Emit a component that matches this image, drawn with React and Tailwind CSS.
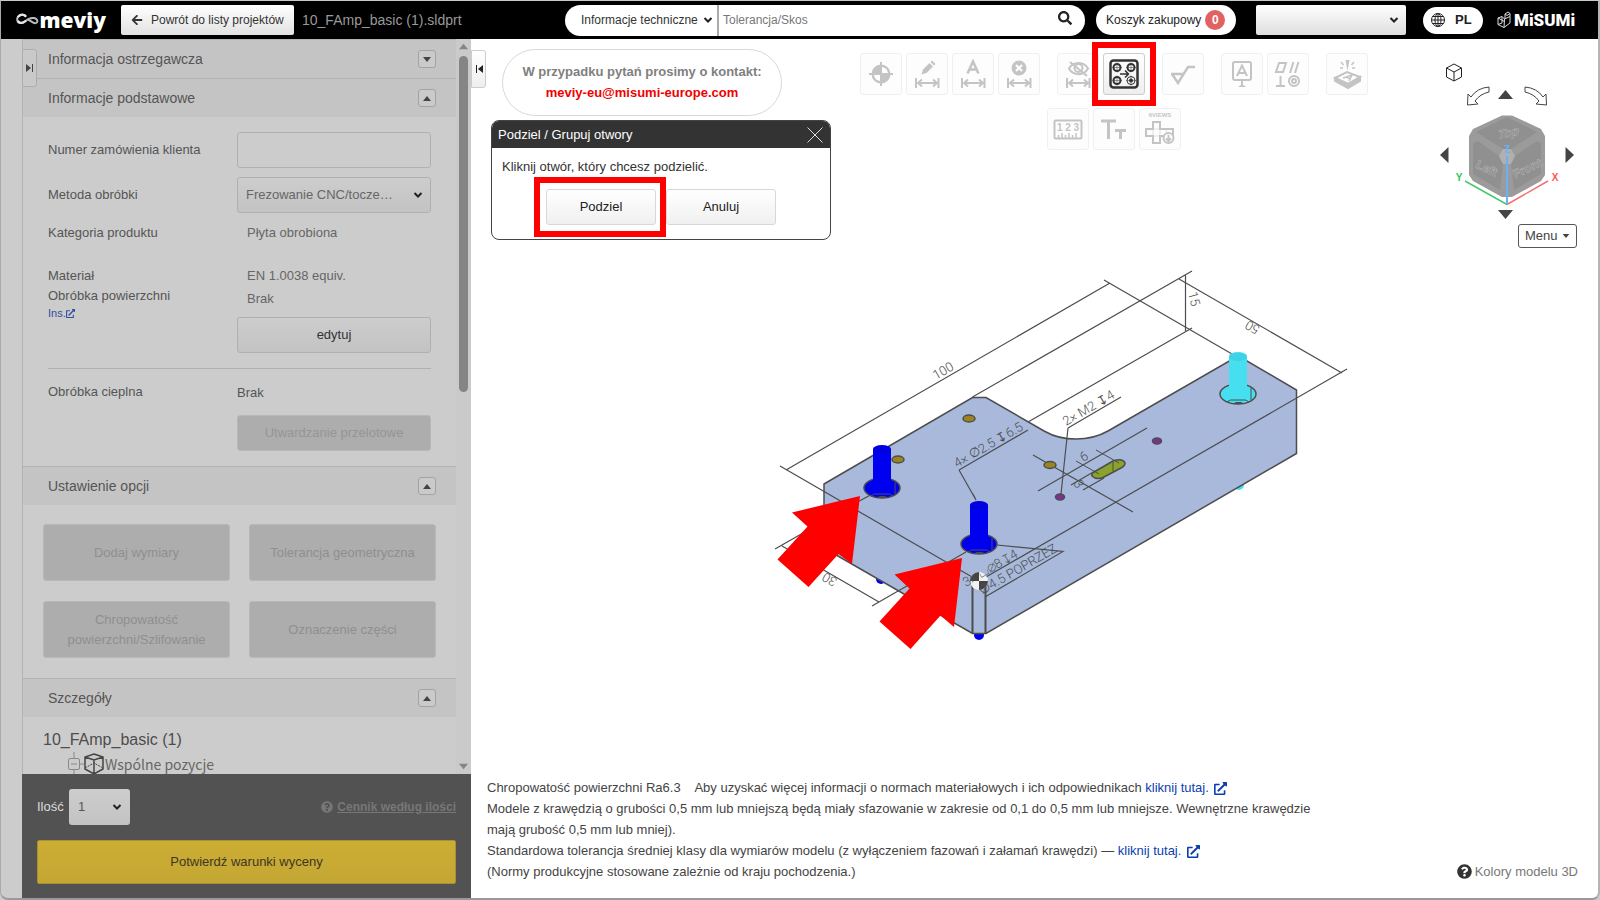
import { FaArrowLeft, FaExternalLinkAlt, FaQuestionCircle, FaSearch } from 'react-icons/fa'

const LINE = '#4d4d4d'

function Chevron({ className }) {
  return (
    <svg viewBox="0 0 10 8" className={`pointer-events-none h-2 w-[10px] ${className}`} fill="none" stroke="#222" strokeWidth="2">
      <path d="M1.5 2 L5 5.5 L8.5 2" />
    </svg>
  )
}

function Triangle({ up, className }) {
  return (
    <svg viewBox="0 0 10 6" className={className} fill="currentColor">
      <path d={up ? 'M0 6 L5 0 L10 6Z' : 'M0 0 L5 6 L10 0Z'} />
    </svg>
  )
}

/* Header */

function MeviyLogo() {
  return (
    <a href="#meviy" className="flex w-[90px] items-center text-white">
      <svg viewBox="0 0 30 18" className="h-[18px] w-[30px]" fill="none" strokeLinecap="round">
        <path d="M12 3.5 C7 0.5 1.5 4 1.5 8 C1.5 13.5 8 14.5 12 10.5 C16 6.5 20 6 23 6.5 C28 7.5 28.5 12.5 25 13 C21.5 13.5 19.5 10 16 9" stroke="#b9b9c0" strokeWidth="2.5" />
        <path d="M3 4.5 C6 1.5 10 2 12 4 M3 11 C6 14 10 12 12 10.5" stroke="#e4e4e8" strokeWidth="3" />
      </svg>
      <span className="font-['Open_Sans',sans-serif] text-[21px] leading-[28px] font-extrabold">meviy</span>
    </a>
  )
}

function Header() {
  return (
    <header className="flex h-[38px] shrink-0 items-center bg-black pr-[26px] pl-[15px]">
      <MeviyLogo />
      <button className="ml-[15px] flex h-[30px] w-[173px] items-center gap-2 rounded-[2px] bg-linear-to-b from-white to-[#e2e2e2] pl-[10px] text-[12px] whitespace-nowrap text-[#333]">
        <FaArrowLeft className="h-3 w-3" />
        Powrót do listy projektów
      </button>
      <span className="ml-2 text-[14px] whitespace-nowrap text-[#999]">10_FAmp_basic (1).sldprt</span>

      <form className="ml-auto flex h-[31px] w-[520px] items-center overflow-hidden rounded-full bg-white text-[12px]">
        <div className="relative flex h-full w-[154px] items-center border-r-2 border-[#aaa]">
          <select aria-label="Kategoria" className="h-full w-full appearance-none pl-4 text-[#333]">
            <option>Informacje techniczne</option>
          </select>
          <Chevron className="absolute right-1" />
        </div>
        <input aria-label="Szukaj" placeholder="Tolerancja/Skos" className="h-full min-w-0 flex-1 px-1 placeholder:text-[#777]" />
        <button type="button" aria-label="Szukaj" className="mr-[13px] pb-1">
          <FaSearch className="h-[14px] w-[14px] text-[#222]" />
        </button>
      </form>

      <button className="ml-[11px] flex h-[30px] w-[140px] items-center gap-1 rounded-full bg-white pl-[10px] text-[12px] text-[#222]">
        Koszyk zakupowy
        <span className="flex h-5 w-5 items-center justify-center rounded-full bg-[#e06262] font-bold text-white">0</span>
      </button>
      <div className="relative ml-5 flex h-[30px] w-[150px] items-center">
        <select aria-label="Konto" className="h-full w-full appearance-none rounded-[2px] bg-linear-to-b from-white to-[#dedede]">
          <option></option>
        </select>
        <Chevron className="absolute right-[7px]" />
      </div>
      <button className="ml-[17px] flex h-[27px] w-[60px] items-center gap-[10px] rounded-full bg-white pl-2 text-[13px] font-bold text-[#222]">
        <svg viewBox="0 0 14 14" className="h-[14px] w-[14px]" fill="none" stroke="#222">
          <circle cx="7" cy="7" r="6.5" />
          <ellipse cx="7" cy="7" rx="3" ry="6.5" />
          <path d="M7 0.5 V13.5 M0.5 7 H13.5 M1.5 3.5 H12.5 M1.5 10.5 H12.5" />
        </svg>
        PL
      </button>
      <a href="#misumi" className="ml-[14px] flex w-[75px] items-center gap-[3px] text-white">
        <svg viewBox="0 0 14 18" className="h-[18px] w-[14px] shrink-0" fill="none" stroke="#ddd" strokeWidth="1">
          <path d="M1 7 L5 5.5 L7.5 8 L13 5.5 V12 L7 16.5 L1 13.5Z M7.5 8 L7 16.5 M1 7 L7.5 10.5 M5 5.5 L5 12 L1 13.5 M8 3 L11 1 L13 2.5 L13 5.5 M8 3 L10 4.5 L13 2.5 M8 3 V7.5" />
        </svg>
        <span className="font-[Roboto,sans-serif] text-[17px] leading-[20px] font-black">MiSUMi</span>
      </a>
    </header>
  )
}

/* Sidebar */

function SectionHead({ title, open = true }) {
  return (
    <div className="flex h-[39px] items-center justify-between border-t border-[#b3b3b3] bg-[#c4c4c4] pr-5 pl-[25px]">
      <h2 className="text-[14px] text-[#555]">{title}</h2>
      <button aria-label={title} className="flex h-[18px] w-[18px] items-center justify-center rounded-[3px] border border-[#a3a3a3] bg-[#cacaca] text-[#444]">
        <Triangle up={open} className="h-[5px] w-2" />
      </button>
    </div>
  )
}

function OptionButton({ children }) {
  return (
    <button disabled className="h-[57px] rounded-[3px] border border-[#b8b8b8] bg-[#adadad] px-5 text-[13px] leading-5 text-[#8f8f8f]">
      {children}
    </button>
  )
}

function BasicInfo() {
  return (
    <div className="grid grid-cols-[189px_194px] px-[25px] py-[15px] text-[13px] leading-[20px] text-[#555]">
      <label htmlFor="order" className="self-center">Numer zamówienia klienta</label>
      <input id="order" className="h-9 rounded-[3px] border border-[#b0b0b0]" />

      <label htmlFor="method" className="mt-[9px] self-center">Metoda obróbki</label>
      <div className="relative mt-[9px] flex h-9 items-center">
        <select id="method" className="h-full w-full appearance-none rounded-[3px] border border-[#b0b0b0] bg-linear-to-b from-[#cdcdcd] to-[#c3c3c3] pl-2 text-[#666]">
          <option>Frezowanie CNC/tocze…</option>
        </select>
        <Chevron className="absolute right-2" />
      </div>

      <span className="mt-[10px]">Kategoria produktu</span>
      <span className="mt-[10px] pl-[10px] text-[#666]">Płyta obrobiona</span>

      <div className="mt-[23px]">
        <p>Materiał</p>
        <p>Obróbka powierzchni</p>
        <a href="#ins" className="flex items-center text-[11px] leading-[14px] text-[#304f9e]">
          Ins.<FaExternalLinkAlt className="h-[9px] w-[9px]" />
        </a>
      </div>
      <div className="mt-[23px]">
        <p className="pl-[10px] text-[#666]">EN 1.0038 equiv.</p>
        <p className="mt-[3px] pl-[10px] text-[#666]">Brak</p>
        <button className="mt-2 h-9 w-full rounded-[3px] border border-[#b0b0b0] bg-linear-to-b from-[#cdcdcd] to-[#c3c3c3] text-[#333]">
          edytuj
        </button>
      </div>

      <hr className="col-span-2 mt-[15px] border-[#b0b0b0]" />
      <span className="mt-[13px]">Obróbka cieplna</span>
      <div className="mt-[14px]">
        <p>Brak</p>
        <button disabled className="mt-[12px] h-9 w-full rounded-[3px] border border-[#b8b8b8] bg-[#adadad] text-[#959595]">
          Utwardzanie przelotowe
        </button>
      </div>
    </div>
  )
}

function Sidebar() {
  return (
    <aside className="ml-[21px] flex w-[449px] shrink-0 flex-col">
      <div className="relative flex min-h-0 flex-1">
        <button aria-label="Zwiń" className="absolute top-[10px] left-0 flex h-[38px] w-[15px] items-center justify-center rounded-r-[3px] border border-[#adadad] bg-[#c9c9c9]">
          <svg viewBox="0 0 8 8" className="h-2 w-2" fill="#444"><path d="M0 0 L5 4 L0 8Z M6 0 H7 V8 H6Z" /></svg>
        </button>
        <div className="min-w-0 flex-1 overflow-hidden border-l border-[#b3b3b3]">
          <SectionHead title="Informacja ostrzegawcza" open={false} />
          <SectionHead title="Informacje podstawowe" />
          <BasicInfo />
          <SectionHead title="Ustawienie opcji" />
          <div className="grid grid-cols-2 gap-x-[19px] gap-y-5 px-5 pt-[19px] pb-5">
            <OptionButton>Dodaj wymiary</OptionButton>
            <OptionButton><span className="whitespace-nowrap">Tolerancja geometryczna</span></OptionButton>
            <OptionButton>Chropowatość powierzchni/Szlifowanie</OptionButton>
            <OptionButton>Oznaczenie części</OptionButton>
          </div>
          <SectionHead title="Szczegóły" />
          <div className="pt-[11px] pl-5">
            <p className="text-[16px] leading-6 text-[#4d4d4d]">10_FAmp_basic (1)</p>
            <div className="flex h-6 items-center pl-6 font-['Noto_Sans_CJK_JP',sans-serif] text-[14px] text-[#666]">
              <svg viewBox="0 0 38 24" className="h-6 w-[38px]" fill="none" stroke="#888">
                <path d="M7 0 V6 M7 18 V24 M13 12 H17 M4 12 H10" />
                <rect x="1.5" y="6.5" width="11" height="11" rx="1.5" />
                <path d="M27 2 L36 5 V17 L27 22 L18 17 V5Z M18 5 L27 8 L36 5 M27 8 V22" stroke="#444" strokeWidth="1.5" />
                <path d="M18 16 L27 11 L36 16" stroke="#444" strokeDasharray="2 1" />
              </svg>
              Wspólne pozycje
            </div>
          </div>
        </div>
        <div className="flex w-[15px] flex-col items-center bg-[#cacaca] pt-1 text-[#858585]">
          <Triangle up className="h-[7px] w-[9px]" />
          <div className="mt-[6px] h-[46%] w-[9px] rounded-full bg-[#858585]" />
          <Triangle className="mt-auto mb-1 h-[7px] w-[9px]" />
        </div>
      </div>

      <div className="bg-[#525252] px-[15px] pt-[15px] pb-[14px] text-[13px]">
        <div className="flex items-center">
          <label htmlFor="qty" className="w-8 text-[#ddd]">Ilość</label>
          <div className="relative flex h-9 w-[61px] items-center">
            <select id="qty" className="h-full w-full appearance-none rounded-[3px] bg-linear-to-b from-[#cdcdcd] to-[#c3c3c3] pl-[9px] text-[#555]">
              <option>1</option>
            </select>
            <Chevron className="absolute right-2" />
          </div>
          <a href="#prices" className="ml-auto flex items-center gap-1 text-[12px] font-bold text-[#777]">
            <FaQuestionCircle className="h-3 w-3" />
            <span className="underline">Cennik według ilości</span>
          </a>
        </div>
        <button className="mt-[15px] h-[44px] w-full rounded-[2px] border border-[#a8912f] bg-linear-to-b from-[#ccae34] to-[#c4a634] text-[#3d3823]">
          Potwierdź warunki wyceny
        </button>
      </div>
    </aside>
  )
}

/* Toolbar */

const dimArrow = <path d="M9 24 V34 M31.5 24 V34 M11 29 H30 M15 25.5 L11 29 L15 32.5 M26 25.5 L30 29 L26 32.5" />

const icons = {
  center: (
    <>
      <circle cx="20" cy="20" r="8.5" fill="currentColor" />
      <path d="M20 8 V32 M8 20 H32" />
      <path d="M21 19 V13 A7 7 0 0 1 27 19Z M19 21 V27 A7 7 0 0 1 13 21Z" fill="#fff" stroke="none" />
    </>
  ),
  edit: (
    <>
      <path d="M14.5 20.5 L16 15.5 L22.5 9 L26 12.5 L19.5 19Z" fill="currentColor" stroke="none" />
      <path d="M23.5 8 L25 6.500 L28.500 10 L27 11.5Z" fill="currentColor" stroke="none" />
      {dimArrow}
    </>
  ),
  text: <><path d="M14.5 19.5 L20 7.5 L25.5 19.5 M16.5 15.5 H23.5" strokeWidth="2.5" />{dimArrow}</>,
  remove: (
    <>
      <circle cx="20" cy="14" r="7.5" fill="currentColor" stroke="none" />
      <path d="M17 11 L23 17 M23 11 L17 17" stroke="#fff" />
      {dimArrow}
    </>
  ),
  hide: (
    <>
      <path d="M11 14.5 C15 7 26 7 30 14.5 C26 22 15 22 11 14.5Z" />
      <circle cx="20.5" cy="14" r="4" />
      <path d="M12 8 L29 22" />
      {dimArrow}
    </>
  ),
  split: (
    <>
      <rect x="6.5" y="6.5" width="27" height="27" rx="3" strokeWidth="2.5" />
      <circle cx="13" cy="13.5" r="3.5" /><circle cx="27" cy="13.5" r="3.5" />
      <circle cx="13" cy="26.5" r="3.5" />
      <circle cx="27" cy="26.5" r="4" strokeWidth="1" />
      <circle cx="27" cy="26.5" r="2" fill="currentColor" stroke="none" />
      <path d="M16 20 H24 M21 16.5 L24.5 20 L21 23.5" strokeWidth="1.5" />
      <path d="M13 8.5 V18.5 M8.5 13.5 H18 M27 8.5 V18.5 M22 13.5 H32 M13 21.5 V31.5 M8.5 26.5 H18 M27 21.5 V31.5 M22 26.5 H32" strokeWidth="0.5" />
    </>
  ),
  rough: <path d="M8 20 H21 M9 20 L15 29 L25 13 H32" strokeWidth="2.5" />,
  label: (
    <>
      <rect x="11" y="8" width="18" height="18" rx="2" />
      <path d="M15 22 L20 11.5 L25 22 M17 19 H23 M20 26 V31" />
      <path d="M16 33 L20 30 L24 33Z" fill="currentColor" stroke="none" />
    </>
  ),
  geom: (
    <>
      <path d="M8 18 L11 9 H18 L15 18Z M22 19 L25.5 8 M27 19 L30.5 8 M12.5 22 V32 M8 32 H17" />
      <circle cx="26" cy="27" r="5" /><circle cx="26" cy="27" r="2" />
    </>
  ),
  engrave: (
    <>
      <path d="M8 24 L20 18 L33 23 L21 30Z" />
      <path d="M8 24 V27 L21 34 L33 27 V23 L21 30Z" fill="currentColor" />
      <path d="M16 24 L25 21 L22 27 M19 23 L24 25 M14 8 L16.5 11 M27 8 L24.5 11 M13 14 H16 M25 14 H28" strokeWidth="1.5" />
      <path d="M18.5 6 H22.5 L20.5 17Z" fill="currentColor" stroke="none" />
    </>
  ),
  ruler: (
    <>
      <rect x="6.5" y="11.5" width="27" height="18" rx="1" />
      <path d="M10.5 29 V26 M14 29 V24 M17.5 29 V26 M21 29 V24 M24.5 29 V26 M28 29 V24" strokeWidth="1.5" />
      <text x="20" y="22" fontSize="10" fontWeight="bold" textAnchor="middle" fill="currentColor" stroke="none">1 2 3</text>
    </>
  ),
  font: <path d="M7 12 H22 M14.5 12 V30 M21 21.5 H32 M26.5 21.5 V30" strokeWidth="3" />,
  views: (
    <>
      <text x="20" y="8" fontSize="6" fontWeight="bold" textAnchor="middle" fill="currentColor" stroke="none">6VIEWS</text>
      <path d="M13 13 H20 V20 H33 V27 H20 V34 H13 V27 H6 V20 H13Z" />
      <path d="M13 20 H20 V27 H13Z M26.5 20 V27" strokeWidth="0.5" />
      <circle cx="28.5" cy="29" r="5" fill="#fff" />
      <path d="M28.5 26 V32 M26 29.5 L28.5 32 L31 29.5" />
    </>
  ),
}

function Tool({ icon, label, active }) {
  return (
    <button
      aria-label={label}
      className={`relative h-[42px] w-[42px] rounded-[3px] border ${active ? 'border-[#ccc] bg-linear-to-b from-white to-[#eee] text-[#333]' : 'border-[#f0f0f0] bg-[#fdfdfd] text-[#c4c4c4]'}`}
    >
      <svg viewBox="0 0 40 40" className="h-10 w-10" fill="none" stroke="currentColor" strokeWidth="2">
        {icons[icon]}
      </svg>
      {active && <span className="absolute -top-3 -left-3 h-[64px] w-[64px] border-6 border-[#f00]" />}
    </button>
  )
}

function Toolbar() {
  return (
    <div className="flex flex-1 flex-col items-center gap-[13px] pt-[14px]">
      <div className="flex gap-[17px]">
        <div className="flex gap-1">
          <Tool icon="center" label="Początek układu" />
          <Tool icon="edit" label="Edytuj wymiar" />
          <Tool icon="text" label="Tekst wymiaru" />
          <Tool icon="remove" label="Usuń wymiar" />
        </div>
        <div className="flex gap-1">
          <Tool icon="hide" label="Ukryj wymiar" />
          <Tool icon="split" label="Podziel / Grupuj" active />
        </div>
        <Tool icon="rough" label="Chropowatość" />
        <div className="flex gap-1">
          <Tool icon="label" label="Oznaczenie" />
          <Tool icon="geom" label="Tolerancja" />
        </div>
        <Tool icon="engrave" label="Grawerowanie" />
      </div>
      <div className="flex gap-1">
        <Tool icon="ruler" label="Wymiary" />
        <Tool icon="font" label="Rozmiar tekstu" />
        <Tool icon="views" label="Widoki" />
      </div>
    </div>
  )
}

function ContactNote() {
  return (
    <div className="ml-[11px] w-[280px] rounded-[34px] border border-[#d8d8d8] pt-[11px] pb-3 text-center text-[13px] leading-[21px] font-bold whitespace-nowrap">
      <p className="text-[#808080]">W przypadku pytań prosimy o kontakt:</p>
      <a href="mailto:meviy-eu@misumi-europe.com" className="text-[#f00000]">meviy-eu@misumi-europe.com</a>
    </div>
  )
}

function SplitDialog() {
  const button = 'h-9 w-[110px] rounded-[3px] border border-[#d8d8d8] bg-linear-to-b from-white to-[#f0f0f0] text-[#222]'
  return (
    <div role="dialog" aria-label="Podziel / Grupuj otwory" className="mt-1 h-[120px] w-[340px] overflow-hidden rounded-lg border border-[#444] bg-white text-[13px]">
      <div className="flex h-[27px] items-center justify-between bg-[#333] pr-[7px] pl-[6px] text-white">
        <span>Podziel / Grupuj otwory</span>
        <button aria-label="Zamknij">
          <svg viewBox="0 0 16 16" className="h-4 w-4" stroke="#ddd"><path d="M0.5 0.5 L15.5 15.5 M15.5 0.5 L0.5 15.5" /></svg>
        </button>
      </div>
      <p className="pt-[9px] pl-[10px] leading-5 text-[#333]">Kliknij otwór, który chcesz podzielić.</p>
      <div className="flex gap-[10px] pt-[12px] pl-[54px]">
        <div className="relative">
          <button className={button}>Podziel</button>
          <span className="absolute -top-3 -left-3 h-[60px] w-[132px] border-6 border-[#f00]" />
        </div>
        <button className={button}>Anuluj</button>
      </div>
    </div>
  )
}

function ViewCube() {
  return (
    <div className="flex w-[180px] flex-col items-end">
      <svg viewBox="1397 60 180 160" className="mt-[21px] h-[160px] w-[180px]" fill="none">
        <path d="M1454 64 L1461.5 68 V77 L1454 81 L1446.5 77 V68Z M1446.5 68 L1454 72 L1461.5 68 M1454 72 V81" stroke="#222" />
        <path d="M1489 87 V92 Q1480 94 1475 101 L1478 104 L1467.5 105 L1468 94 L1471 97 Q1477 88 1489 87Z" stroke="#444" />
        <path d="M1525 87 V92 Q1534 94 1539 101 L1536 104 L1546.5 105 L1546 94 L1543 97 Q1537 88 1525 87Z" stroke="#444" />
        <path d="M1498 99 L1505.5 90 L1513 99Z M1498 210 L1505.5 219 L1513 210Z M1448.5 147 V163 L1440 155Z M1565.5 147 V163 L1574 155Z" fill="#444" />
        <path d="M1502 115.5 H1512 L1541 129 L1545 136 V175 L1541 181 L1512 197 H1502 L1473 181 L1469 175 V136 L1473 129Z" fill="#9b9b9b" />
        <path d="M1499 156 L1478 141 L1473 143 V174 L1500 190 L1503 164Z" fill="#909090" />
        <path d="M1515 156 L1537 141 L1541 143 V174 L1514 190 L1511 164Z" fill="#909090" />
        <path d="M1507 117 L1537 132 L1511 149 H1503 L1476 132Z" fill="#909090" />
        <path d="M1503 149 H1511 L1515 156 L1511 164 H1503 L1499 156Z" fill="#b0b0b0" />
        <g fontSize="12" fontWeight="bold" fill="#8a8a8a" stroke="#b8b8b8" strokeWidth="0.5" textAnchor="middle">
          <text transform="translate(1508 137) rotate(-12) skewX(-20)">Top</text>
          <text transform="translate(1485 172) rotate(25)">Left</text>
          <text transform="translate(1529 172) rotate(-25)">Front</text>
        </g>
        <path d="M1465 181 L1507 204.5" stroke="#49c96d" strokeWidth="1.5" />
        <path d="M1507 204.5 L1548 181" stroke="#f56f6f" strokeWidth="1.5" />
        <path d="M1507 156 V204" stroke="#6cb0f5" strokeWidth="2" />
        <g fontSize="10" fontWeight="bold" textAnchor="middle">
          <text x="1459" y="181" fill="#2fc45a">Y</text>
          <text x="1555" y="181" fill="#f55">X</text>
          <text x="1507" y="153" fill="#6cb0f5">Z</text>
        </g>
      </svg>
      <button className="mt-1 flex h-6 w-[59px] items-center gap-1 rounded-[3px] border border-[#555] bg-white pl-[6px] text-[13px] text-[#444]">
        Menu
        <Triangle className="h-1 w-2" />
      </button>
    </div>
  )
}

/* 3D model */

function Bolt({ x, top, y, fill, dark }) {
  return (
    <g>
      <ellipse cx={x} cy={y} rx="18" ry="10" fill={fill} stroke={LINE} strokeWidth="1.5" />
      <path d={`M${x - 11} ${y + 8} q3 -3 8 -2 l6 0 q5 -1 8 2 M${x + 13} ${y - 6} v12`} stroke={LINE} />
      <path d={`M${x - 6} ${y + 10} l4 -2 h5 l4 2Z`} fill={LINE} />
      <path d={`M${x - 9} ${top + 4} a9 4 0 0 1 18 0 V${y + 2} a9 3 0 0 1 -18 0Z`} fill={fill} />
      <ellipse cx={x} cy={top + 5} rx="9" ry="4" fill={dark} />
    </g>
  )
}

function Model() {
  return (
    <svg viewBox="715 260 640 400" className="mt-[11px] h-[400px] w-[640px] shrink-0 self-center" fill="none" role="img" aria-label="Model 3D">
      {/* ends of the bolts below the plate */}
      <circle cx="979" cy="636" r="5" fill="#0000ee" />
      <circle cx="881" cy="580" r="5" fill="#0000ee" />
      <circle cx="1239" cy="486" r="5" fill="#45dff0" />

      <path
        d="M824 485 L972.5 398.5 H986 L1045 432.5 Q1058 440 1076 440 Q1094 440 1108 432 L1231 361 L1242 359 L1296.5 391 V454.5 L986 634.5 H972.5 L824 549Z"
        fill="#a8b9dc" stroke={LINE} strokeWidth="1.5"
      />
      <path d="M972.5 578 V634 M985.5 578 V634" stroke={LINE} strokeWidth="2" />

      {/* dimension lines */}
      <g stroke={LINE} strokeWidth="1.2">
        <path d="M786 471 L1110 284 M780 467 L979 582 M1104 281 L1232 355" />
        <path d="M972.5 398 L1192 272 M1028 423 L1192 329 M1185.5 276 V332" />
        <path d="M1179 280 L1342 374 M1347 370 L979 582" />
        <path d="M782 547 L879 603 M775 550 L824 522 M872 607 L966 553 M852 506 L876 493" />
        <path d="M959 471 L1028 431 M959 471 L976 501 M973 495 L976 501" />
        <path d="M1068 429 L1121 398 M1068 429 L1061 495" />
        <path d="M1038 492 L1147 429 M1033 456 L1133 513 M1083 491 L1104 479 M1071 486 L1095 472" />
        <path d="M997 546 L1063 552.5 L985 598" />
      </g>

      {/* holes */}
      <g stroke={LINE} strokeWidth="1.5">
        <ellipse cx="969" cy="419.5" rx="6" ry="3.5" fill="#9a8420" />
        <ellipse cx="898" cy="460.5" rx="6" ry="3.5" fill="#9a8420" />
        <ellipse cx="1050" cy="466" rx="6" ry="3.5" fill="#9a8420" />
        <ellipse cx="1157" cy="442" rx="4.5" ry="3" fill="#7d2f96" />
        <ellipse cx="1060" cy="498" rx="4.5" ry="3" fill="#7d2f96" />
        <path d="M1094 473 L1113 462 Q1123 459 1125 464 Q1125 467 1121 469 L1103 478.5 Q1096 481 1092 477 Q1091 475 1094 473Z" fill="#8ba32c" />
        <path d="M1113 462 V472 M1096 451 L1119 464 M1076 462 L1099 475" strokeWidth="1" />
      </g>

      <Bolt x={882} top={446} y={489} fill="#0000f0" dark="#0000e0" />
      <Bolt x={979} top={502} y={545} fill="#0000f0" dark="#0000e0" />
      <Bolt x={1238} top={353} y={395} fill="#45dff0" dark="#3fd2e6" />

      <circle cx="979" cy="582" r="9" fill="#f2f2f2" />
      <path d="M979 582 V573 A9 9 0 0 0 970 582Z M979 582 V591 A9 9 0 0 0 988 582Z" fill="#444" />

      {/* dimension texts */}
      <g fill={LINE} fontSize="13" fontWeight="300" fontFamily="Roboto, sans-serif">
        <text transform="translate(936 381) rotate(-30)">100</text>
        <text transform="translate(1188 294) rotate(75)">15</text>
        <text transform="translate(1261 328) rotate(-150)">50</text>
        <text transform="translate(838 580) rotate(-150)">30</text>
        <text transform="translate(957 469) rotate(-30)">4× ∅2.5 ↧6.5</text>
        <text transform="translate(1066 427) rotate(-30)">2× M2 ↧4</text>
        <text transform="translate(966 588) rotate(-30)">3× ⌴∅8 ↧4</text>
        <text transform="translate(982 596) rotate(-30)">∅4.5 POPRZEZ</text>
        <text transform="translate(1083 463) rotate(-30)">6</text>
        <text transform="translate(1073 484) rotate(60)">3</text>
      </g>

      {/* arrows over the two bolts */}
      <path d="M860 497 L792 513.5 L807.5 527.5 L777.5 560.5 L808.5 588 L838.5 555 L852 565Z" fill="#f00" />
      <path d="M962 559 L894.5 575.5 L909.5 589.5 L879.5 622.5 L910.5 650 L940.5 616.5 L954 628Z" fill="#f00" />
    </svg>
  )
}

function MoreLink() {
  return (
    <a href="#more" className="text-[#0b3fb0]">
      kliknij tutaj. <FaExternalLinkAlt className="ml-[2px] inline h-[13px] w-[13px]" />
    </a>
  )
}

function Notes() {
  return (
    <div className="mt-auto flex items-end justify-between pr-5 pb-4 pl-4 text-[13px] leading-[21px] text-[#444]">
      <div className="max-w-[850px]">
        <p>Chropowatość powierzchni Ra6.3 &nbsp;&nbsp; Aby uzyskać więcej informacji o normach materiałowych i ich odpowiednikach <MoreLink /></p>
        <p>Modele z krawędzią o grubości 0,5 mm lub mniejszą będą miały sfazowanie w zakresie od 0,1 do 0,5 mm lub mniejsze. Wewnętrzne krawędzie mają grubość 0,5 mm lub mniej).</p>
        <p>Standardowa tolerancja średniej klasy dla wymiarów modelu (z wyłączeniem fazowań i załamań krawędzi) — <MoreLink /></p>
        <p>(Normy produkcyjne stosowane zależnie od kraju pochodzenia.)</p>
      </div>
      <a href="#colors" className="flex items-center gap-[3px] text-[#777]">
        <FaQuestionCircle className="h-[15px] w-[15px] text-[#333]" />
        Kolory modelu 3D
      </a>
    </div>
  )
}

function App() {
  return (
    <div className="h-screen overflow-hidden bg-[#ccc] font-['Liberation_Sans',Arial,sans-serif]">
      <div className="flex h-full flex-col overflow-hidden rounded-b-lg border-t border-r-2 border-b-2 border-l border-t-[#c8ccc8] border-r-[#b5b5b5] border-b-[#999] border-l-[#aaa] bg-[#ccc]">
        <Header />
        <div className="flex min-h-0 flex-1">
          <Sidebar />
          <main className="flex min-w-0 flex-1 flex-col bg-white">
            <div className="flex pr-[21px]">
              <button aria-label="Rozwiń" className="mt-[11px] flex h-[38px] w-[15px] items-center justify-center rounded-r-[3px] border border-[#ccc] bg-linear-to-b from-white to-[#eee]">
                <svg viewBox="0 0 8 8" className="h-2 w-2" fill="#222"><path d="M8 0 L3 4 L8 8Z M1 0 H2 V8 H1Z" /></svg>
              </button>
              <div className="ml-[5px] pt-[10px]">
                <ContactNote />
                <SplitDialog />
              </div>
              <Toolbar />
              <ViewCube />
            </div>
            <Model />
            <Notes />
          </main>
        </div>
      </div>
    </div>
  )
}

export default App
